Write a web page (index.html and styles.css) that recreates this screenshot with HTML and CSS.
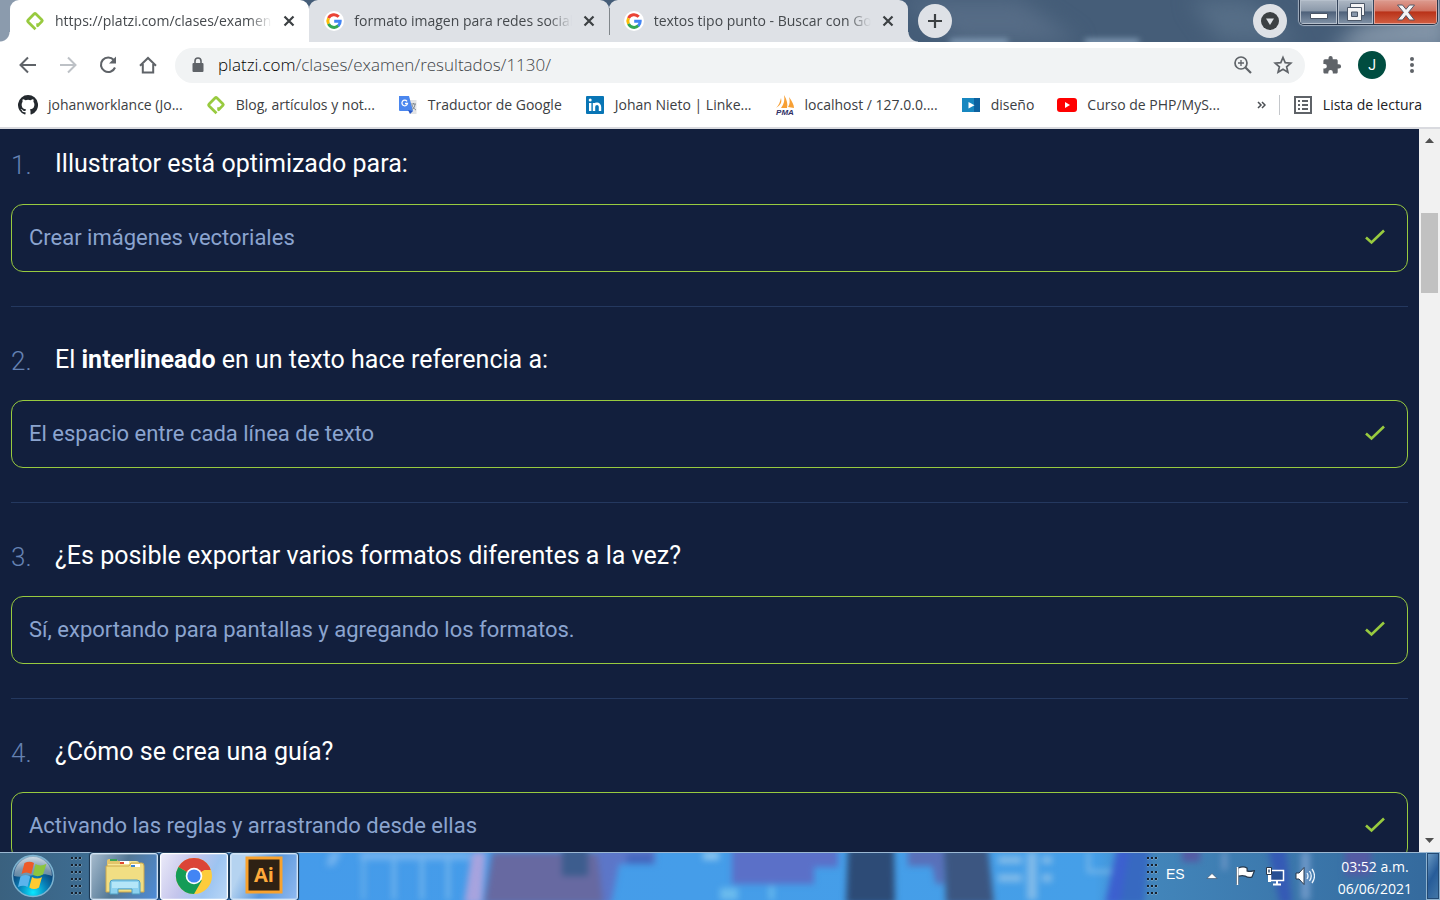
FILE: index.html
```html
<!DOCTYPE html>
<html lang="es">
<head>
<meta charset="utf-8">
<title>Resultados del examen</title>
<link rel="stylesheet" href="styles.css">
</head>
<body>
<svg class="defs" width="0" height="0" aria-hidden="true">
  <defs>
    <symbol id="platzi" viewBox="0 0 20 20"><path d="M10.500 18.300 2.900 10.700a1 1 0 0 1 0-1.400L9.300 2.700a1 1 0 0 1 1.400 0L17 9a1 1 0 0 1 0 1.400L12.600 14.700V12.200" fill="none" stroke="#98ca3f" stroke-width="2.700" stroke-linejoin="round"/></symbol>
    <symbol id="google" viewBox="0 0 20 20"><circle cx="10" cy="10" r="10" fill="#fff"/><g fill="none" stroke-width="3"><path d="M14.700 5.800A6.200 6.200 0 0 0 4.500 7.200" stroke="#ea4335"/><path d="M4.500 7.200a6.200 6.200 0 0 0 0 5.700" stroke="#fbbc05"/><path d="M4.500 12.900a6.200 6.200 0 0 0 9.800 1.800" stroke="#34a853"/><path d="M14.200 14.800A6.200 6.200 0 0 0 16.200 10.200H10.200" stroke="#4285f4"/></g></symbol>
    <symbol id="close" viewBox="0 0 12 12"><path d="M1.500 1.500l9 9M10.500 1.500l-9 9" stroke="#3c4043" stroke-width="2.200"/></symbol>
    <symbol id="check" viewBox="0 0 20 16"><path d="M1 8.500 6.500 13.500 19 1.500" fill="none" stroke="#98ca3f" stroke-width="2.600"/></symbol>
  </defs>
</svg>

<header class="tabstrip">
  <svg class="glass" viewBox="0 0 1440 42" preserveAspectRatio="none" aria-hidden="true">
    <path d="M0 0h20v42H0z" fill="#8b9bad"/>
    <g class="haze"><path d="M900 0h120l60 42H960z" fill="#566c86"/><path d="M1190 0h60l50 42h-80z" fill="#566e87"/><path d="M1360 25 1450 5v47h-120z" fill="#8294a7"/></g>
    <g class="blur"><path d="M950 39h58v6h-58zM1085 39h54v6h-54z" fill="#86a0ba"/></g>
  </svg>
  <nav class="tabs" aria-label="Pestañas">
    <div class="tab active"><svg class="fav"><use href="#platzi"/></svg><a class="tab-title" href="#">https://platzi.com/clases/examen</a><button class="tab-close" aria-label="Cerrar"><svg><use href="#close"/></svg></button></div>
    <div class="tab"><svg class="fav"><use href="#google"/></svg><a class="tab-title" href="#">formato imagen para redes social</a><button class="tab-close" aria-label="Cerrar"><svg><use href="#close"/></svg></button></div>
    <div class="tab last"><svg class="fav"><use href="#google"/></svg><a class="tab-title" href="#">textos tipo punto - Buscar con Go</a><button class="tab-close" aria-label="Cerrar"><svg><use href="#close"/></svg></button></div>
  </nav>
  <button class="round" aria-label="Nueva pestaña"><svg width="16" height="16" viewBox="0 0 16 16"><path d="M8 1v14M1 8h14" stroke="#3c4043" stroke-width="2.200"/></svg></button>
  <div class="window">
    <button class="round" aria-label="Buscar pestañas"><svg width="18" height="18" viewBox="0 0 18 18"><circle cx="9" cy="9" r="9" fill="#3c4043"/><path d="M5 6.500h8L9 13z" fill="#dee1e6"/></svg></button>
    <div class="winbuttons">
      <button class="min" aria-label="Minimizar"><svg width="18" height="6" viewBox="0 0 18 6"><path d="M.5.500h17v5H.5z" fill="#fff" stroke="#4b5667"/></svg></button>
      <button class="max" aria-label="Restaurar"><svg width="22" height="20" viewBox="0 0 22 20"><path d="M5.500 1.500h14v12h-14z" fill="#f4f4f5" stroke="#4b5667"/><path d="M2.500 5.500h14v13h-14z" fill="#f4f4f5" stroke="#4b5667"/><path d="M6.500 10h6v4.500h-6z" fill="#8796aa" stroke="#4b5667"/></svg></button>
      <button class="quit" aria-label="Cerrar ventana"><svg width="20" height="17" viewBox="0 0 20 17"><path d="M1.500 1h5L10 5.300 13.500 1h5l-6 7.400 6 7.600h-5L10 11.600 6.500 16h-5l6-7.600z" fill="#f4f4f5" stroke="#555765"/></svg></button>
    </div>
  </div>
</header>

<div class="toolbar">
  <button class="tool" aria-label="Atrás"><svg viewBox="0 0 20 20"><path d="M18 10H3M10 2.500 2.500 10l7.500 7.500" fill="none" stroke="#5f6368" stroke-width="2"/></svg></button>
  <button class="tool" aria-label="Adelante"><svg viewBox="0 0 20 20"><path d="M2 10h15M10 2.500 17.500 10 10 17.500" fill="none" stroke="#bdc1c6" stroke-width="2"/></svg></button>
  <button class="tool" aria-label="Recargar"><svg viewBox="0 0 20 20"><path d="M15.800 5A7.300 7.300 0 1 0 17 12.500" fill="none" stroke="#5f6368" stroke-width="2.100"/><path d="M18 1.500V8.500H11z" fill="#5f6368"/></svg></button>
  <button class="tool" aria-label="Inicio"><svg viewBox="0 0 20 20"><path d="M2 10.800 10 3l8 7.800M4.800 9v8.500h10.400V9" fill="none" stroke="#5f6368" stroke-width="2"/></svg></button>
  <div class="omnibox">
    <svg class="lock" width="12" height="16" viewBox="0 0 12 16"><path d="M1.500 6h9a1 1 0 0 1 1 1v7a1 1 0 0 1-1 1h-9a1 1 0 0 1-1-1V7a1 1 0 0 1 1-1z" fill="#5f6368"/><path d="M3 7V4a3 3 0 0 1 6 0v3" fill="none" stroke="#5f6368" stroke-width="1.600"/></svg>
    <a class="url" href="#"><span>platzi.com</span>/clases/examen/resultados/1130/</a>
    <button class="tool" aria-label="Zoom"><svg viewBox="0 0 20 20"><circle cx="8" cy="8" r="6" fill="none" stroke="#5f6368" stroke-width="1.700"/><path d="M12.500 12.500 18 18" stroke="#5f6368" stroke-width="2.200"/><path d="M8 5v6M5 8h6" stroke="#5f6368" stroke-width="1.300"/></svg></button>
    <button class="tool" aria-label="Marcador"><svg viewBox="0 0 20 20"><path d="m10 2.500 2.200 5.100 5.600.5-4.200 3.700 1.300 5.400L10 14.300l-4.900 2.900 1.300-5.400L2.200 8.100l5.600-.5z" fill="none" stroke="#5f6368" stroke-width="1.700"/></svg></button>
  </div>
  <button class="tool ext" aria-label="Extensiones"><svg viewBox="0 0 20 20"><path d="M17 9.300h-1.300V5.800c0-.9-.7-1.600-1.600-1.600h-3.400V3a2.100 2.100 0 0 0-4.200 0v1.200H3A1.600 1.600 0 0 0 1.400 5.800v3.200h1.200a2.200 2.200 0 0 1 0 4.500H1.400v3.400c0 .9.700 1.600 1.600 1.600h3.300v-1.300a2.200 2.200 0 0 1 4.500 0v1.300h3.300c.9 0 1.600-.7 1.600-1.600v-3.400H17a2.100 2.100 0 0 0 0-4.200z" fill="#5f6368"/></svg></button>
  <button class="avatar">J</button>
  <button class="tool" aria-label="Menú"><svg viewBox="0 0 20 20"><g fill="#5f6368"><circle cx="10" cy="4" r="2"/><circle cx="10" cy="10" r="2"/><circle cx="10" cy="16" r="2"/></g></svg></button>
</div>

<nav class="bookmarks" aria-label="Marcadores">
  <div class="links">
    <a href="#"><svg viewBox="0 0 16 16"><path fill="#24292e" d="M8 0a8 8 0 0 0-2.530 15.590c.4.070.550-.170.550-.380v-1.490c-2.230.480-2.700-.950-2.700-.950-.360-.920-.890-1.170-.890-1.170-.730-.500.050-.490.050-.490.810.060 1.230.830 1.230.830.720 1.230 1.880.870 2.340.670.070-.520.280-.870.510-1.070-1.780-.200-3.640-.890-3.640-3.950 0-.870.310-1.590.820-2.150-.080-.200-.360-1.020.080-2.120 0 0 .670-.210 2.200.820a7.600 7.600 0 0 1 4 0c1.530-1.040 2.200-.820 2.200-.820.440 1.100.160 1.920.080 2.120.510.560.820 1.270.820 2.150 0 3.070-1.870 3.750-3.650 3.950.290.250.540.730.540 1.480v2.190c0 .210.150.460.550.380A8 8 0 0 0 8 0z"/></svg>johanworklance (Jo...</a>
    <a href="#"><svg><use href="#platzi"/></svg>Blog, artículos y not...</a>
    <a href="#"><svg viewBox="0 0 20 20"><path d="M9 5h9.500v14H12z" fill="#e3e4e6"/><path d="M1 1h10l4 15H2a1 1 0 0 1-1-1z" fill="#4a86ee"/><path d="m10 15 5 1-3 3z" fill="#2856c5"/><path d="M9 6.300A2.800 2.800 0 1 0 9.500 8.500H7" fill="none" stroke="#fff" stroke-width="1.300"/><path d="M13 9h5M15.500 8v1M17 9c0 3-2 5-3.500 6M14 10c.5 2 2 4 4 5" fill="none" stroke="#7d8790"/></svg>Traductor de Google</a>
    <a href="#"><svg viewBox="0 0 20 20"><rect x="1" y="1" width="18" height="18" rx="1" fill="#0875b5"/><path d="M5.200 8v8M9 16V8M9 12c0-4 6-4.500 6 0v4" fill="none" stroke="#fff" stroke-width="2.400"/><circle cx="5.200" cy="5" r="1.500" fill="#fff"/></svg>Johan Nieto | Linke...</a>
    <a href="#"><svg class="sails" viewBox="0 0 20 20"><path d="M6 3c1 4 0 7-5 10 3-3 4-6 5-10zM9 0c3 5 4 9 3 13H6C9 9 10 5 9 0zM14 2c3 4 5 8 5 11l-6-1c2-3 2-6 1-10z" fill="#f7a035"/><text x="10" y="20" class="pma">PMA</text></svg>localhost / 127.0.0....</a>
    <a href="#"><svg viewBox="0 0 20 20"><path d="M1 3h18v14H1z" fill="#1787c0"/><path d="M13 3h6v14h-6z" fill="#0d619f"/><path d="m7.500 7 6 3.300-6 3.300z" fill="#fff"/></svg>diseño</a>
    <a href="#"><svg viewBox="0 0 20 20"><rect y="3" width="20" height="14" rx="3" fill="#f00"/><path d="m8 7 5 3-5 3z" fill="#fff"/></svg>Curso de PHP/MyS...</a>
  </div>
  <button class="more" aria-label="Más marcadores"><svg width="9" height="8" viewBox="0 0 9 8"><path d="m1 1 3 3-3 3M5 1l3 3-3 3" fill="none" stroke="#4b4f54" stroke-width="1.500"/></svg></button>
  <a class="reading" href="#"><svg viewBox="0 0 20 20"><path d="M2 2h16v16H2z" fill="none" stroke="#5f6368" stroke-width="2"/><path d="M5 6h2m2 0h6M5 10h2m2 0h6M5 14h2m2 0h6" stroke="#5f6368" stroke-width="1.800"/></svg>Lista de lectura</a>
</nav>

<div class="viewport">
  <main class="page">
    <ol class="questions">
      <li class="question"><h2><span class="num">1.</span>Illustrator está optimizado para:</h2><div class="answer"><p>Crear imágenes vectoriales</p><svg><use href="#check"/></svg></div></li>
      <li class="question"><h2><span class="num">2.</span><span>El <strong>interlineado</strong> en un texto hace referencia a:</span></h2><div class="answer"><p>El espacio entre cada línea de texto</p><svg><use href="#check"/></svg></div></li>
      <li class="question"><h2><span class="num">3.</span>¿Es posible exportar varios formatos diferentes a la vez?</h2><div class="answer"><p>Sí, exportando para pantallas y agregando los formatos.</p><svg><use href="#check"/></svg></div></li>
      <li class="question"><h2><span class="num">4.</span>¿Cómo se crea una guía?</h2><div class="answer"><p>Activando las reglas y arrastrando desde ellas</p><svg><use href="#check"/></svg></div></li>
    </ol>
  </main>
  <div class="scrollbar" aria-hidden="true">
    <svg width="9" height="5" viewBox="0 0 9 5"><path d="M0 5 4.500 0 9 5z" fill="#505050"/></svg>
    <div class="track"><div class="thumb"></div></div>
    <svg width="9" height="5" viewBox="0 0 9 5"><path d="M0 0l4.500 5L9 0z" fill="#505050"/></svg>
  </div>
</div>

<footer class="taskbar">
  <svg class="glass" viewBox="0 0 1440 48" preserveAspectRatio="none" aria-hidden="true">
    <defs>
      <linearGradient id="base"><stop offset="0" stop-color="#3a617f"/><stop offset=".06" stop-color="#3d6c91"/><stop offset=".11" stop-color="#4283cf"/><stop offset=".2" stop-color="#459bea"/><stop offset=".76" stop-color="#459fe8"/><stop offset=".8" stop-color="#4285ba"/><stop offset="1" stop-color="#34699c"/></linearGradient>
    </defs>
    <path d="M0 0h1440v48H0z" fill="url(#base)"/>
    <g class="blur">
      <path d="M330 0h12l-8 14h-8zM360 0h110v8H360z" fill="#72b2ee"/>
      <path d="M362 8h3v40h-3zM392 8h4v40h-4zM420 8h4v40h-4zM446 8h4v40h-4z" fill="#72b5ec"/>
      <path d="M492 0h105l8 52H484z" fill="#6769a1"/><path d="M472 0h14l-4 52h-18z" fill="#a7a3de"/><path d="M562-4h26v28h-26z" fill="#3d5d8e"/>
      <path d="M597-4h58v16h-36l-8 40h-8z" fill="#5c76c8"/><path d="M627 2h26v10h-26z" fill="#4567bd"/><path d="M703 0h16v8h-16z" fill="#8bc5ef"/>
      <path d="M732-4h106v19h-24v17h-82z" fill="#5b70c8"/><path d="M720 36h18v12h-18zM769 34h5v14h-5z" fill="#6bbbed"/>
      <path d="M848-4h46l1 56h-49z" fill="#2d4b76"/><path d="M908-4h36v36h-8l-4-18h-24z" fill="#5970b9"/><path d="M944-4h44l6 56h-48z" fill="#3c5681"/>
      <path d="M998 4h24v8h-24zM998 22h24v8h-24zM1027 0h10v48h-10zM1042 4h10v8h-10zM1042 22h10v8h-10zM1087 0h3v18h24v3h-27z" fill="#80bae9"/>
      <path d="M1117-4h28l-12 56h-28z" fill="#3c60cf"/><path d="M1130-4h20l-6 56h-24z" fill="#3769c1"/><path d="M1182-4h18v14h-18zM1345-4h26v28h-26z" fill="#545ba4"/><path d="M1268-4h18l6 56h-12z" fill="#355ab5"/><path d="M1301 0h9v48h-9zM1222 0h5v18h-5z" fill="#6e98c8"/>
    </g>
    <path d="M0 .5h1440" stroke="#9cb8d2"/>
  </svg>
  <button class="start" aria-label="Inicio de Windows"><svg width="44" height="44" viewBox="0 0 44 44">
    <defs><radialGradient id="orb" cx=".5" cy=".9" r=".9"><stop offset="0" stop-color="#0be6ff"/><stop offset=".4" stop-color="#087db5"/><stop offset=".7" stop-color="#0b4175"/><stop offset="1" stop-color="#a5bccd"/></radialGradient><linearGradient id="shine" x2="0" y2="1"><stop stop-color="#e8eff3"/><stop offset="1" stop-color="#8ba2b3"/></linearGradient></defs>
    <circle cx="22" cy="22" r="20.500" fill="url(#orb)" stroke="#7cb3d0" stroke-width="1.500"/><path d="M3 22a19 19 0 0 1 38 0C30 17 14 25 3 22z" fill="url(#shine)" opacity=".7"/>
    <path d="M13.500 9q5-2.500 9.500 0l-2.700 11q-5-3-9.800 0z" fill="#ed5b29"/><path d="M24.500 10q5 3 11-.3L32 20.500q-5 3-10 .5z" fill="#8cc53f"/><path d="M9.500 22.500q5-3 9.800 0l-2.800 10.500q-4-2.500-9.500 0z" fill="#5bb4ed"/><path d="M21 23q5 3 10 0l-3 10.500q-5 3-9.700 0z" fill="#ffcb32"/></svg></button>
  <span class="grip"></span>
  <div class="apps">
    <button class="app folder" aria-label="Explorador"><svg width="42" height="38" viewBox="0 0 42 38">
      <path d="M4 4q0-2 2-2h7l2 2h18v28H4z" fill="#e3c56a"/><path d="M7 2h7v2H7z" fill="#3ba454"/><path d="M5 7h12l2-3h14q3 0 3 2v28H5z" fill="#f6e696"/><path d="M17 4h9v3h-9z" fill="#fff"/><path d="M17 5h4v2h-4z" fill="#df4931"/><path d="M3 9h23l2-3h11q2 0 2 3v26H3z" fill="#f1de83" stroke="#cda84d"/><path d="M28 7h9v3h-9z" fill="#fff"/><path d="M28 8h4v2h-4z" fill="#3885d4"/>
      <path d="M7 37V26q0-3 3-3h24q3 0 3 3v11h-8v-5H15v5z" fill="#8cd1ef" stroke="#4f9dc2"/><path d="M9 25h26v6H9z" fill="#c4effc" opacity=".7"/></svg></button>
    <button class="app current" aria-label="Chrome"><svg width="38" height="38" viewBox="0 0 38 38"><circle cx="19" cy="19" r="18" fill="#fdcc3c"/><path d="M19 19 3.400 10A18 18 0 0 1 34.600 10z" fill="#db4437"/><path d="M3.400 10A18 18 0 0 0 19 37l7.800-13.500L19 19z" fill="#149c57"/><path d="M19 10h15.600l1 3H19z" fill="#db4437"/><circle cx="19" cy="19" r="8.300" fill="#fff"/><circle cx="19" cy="19" r="6.600" fill="#4385f4"/></svg></button>
    <button class="app ai-app" aria-label="Illustrator"><svg width="38" height="38" viewBox="0 0 38 38"><path d="M2 2h34v34H2z" fill="#2e2114" stroke="#f9a22d" stroke-width="3"/><text x="19" y="26" class="ai">Ai</text></svg></button>
  </div>
  <span class="grip tray-grip"></span>
  <div class="tray">
    <span class="lang">ES</span>
    <svg width="12" height="6" viewBox="0 0 12 6"><path d="M.8 5.500 6 .5l5.200 5z" fill="#fff" stroke="#3a4b61" stroke-width=".6"/></svg>
    <svg class="flag" width="20" height="20" viewBox="0 0 20 20"><path d="M2.500 1.500v17M3.500 2.500q5-2 8 0v3q3 1 7 0l-2 5q-3 1-6-1-3-1-7 0z" fill="#fff" stroke="#26384c" stroke-width="2.400"/><path d="M2.500 1v18" stroke="#fff" stroke-width="1.600"/><path d="M3.500 2.500q5-2 8 0v3q3 1 7 0l-2 5q-3 1-6-1-3-1-7 0z" fill="#fff"/></svg>
    <svg width="20" height="20" viewBox="0 0 20 20"><path d="M5.500 4.500h13v10h-13z" fill="#274f93" stroke="#fff" stroke-width="1.500"/><path d="M12 15v3M8 18.500h8M4 8v7h2" fill="none" stroke="#fff" stroke-width="2"/><path d="M1.500 1.500h5v7h-5z" fill="#fff" stroke="#29384c"/><path d="M3 3.500h2v3H3z" fill="#677b91"/></svg>
    <svg width="20" height="20" viewBox="0 0 20 20"><path d="M1 7h3l5-5.500v17L4 13H1z" fill="#fff" stroke="#29384c"/><path d="M12 7q2 3 0 6M14.500 5q3.500 5 0 10M17 3q5 7 0 14" fill="none" stroke="#e9f3fc" stroke-width="1.300"/></svg>
  </div>
  <time class="clock" datetime="2021-06-06T03:52">03:52 a.m.<br>06/06/2021</time>
  <button class="desktop" aria-label="Mostrar escritorio"></button>
</footer>
</body>
</html>
```
FILE: styles.css
```css
* { box-sizing: border-box; }
body { margin: 0; height: 100vh; display: flex; flex-direction: column; overflow: hidden; background: #fff; font-family: "Open Sans", "Noto Sans", sans-serif; }
button { margin: 0; padding: 0; border: 0; background: none; display: grid; place-items: center; font: inherit; }
a { color: inherit; text-decoration: none; }
svg { display: block; flex: none; }
.defs, .glass { position: absolute; }
.glass { inset: 0; width: 100%; height: 100%; }
.blur { filter: blur(3px); }
.haze { filter: blur(10px); }

.tabstrip { position: relative; flex: none; display: flex; align-items: center; height: 42px; padding-left: 10px; background: #455d78; overflow: hidden; }
.tabs { position: relative; display: flex; width: 898px; height: 42px; }
.tab { position: relative; flex: 1; min-width: 0; display: flex; align-items: center; padding: 0 12px 0 15px; background: #dee1e6; border-radius: 9px 9px 0 0; font-size: 14px; color: #45494d; }
.tab.active { background: #fff; }
.tab.active::before, .tab.last::after { content: ""; position: absolute; bottom: 0; width: 10px; height: 10px; }
.tab.active::before { right: 100%; background: radial-gradient(circle at 0 0, transparent 9px, #fff 10px); }
.tab.last::after { left: 100%; background: radial-gradient(circle at 100% 0, transparent 9px, #dee1e6 10px); }
.tab.last { padding-left: 14px; border-left: 1px solid #80868b; border-image: linear-gradient(transparent 9px, #80868b 9px, #80868b 34px, transparent 34px) 1; }
.tab .fav { width: 20px; height: 20px; margin-right: 10px; }
.tab-title { flex: 1; min-width: 0; overflow: hidden; white-space: nowrap; line-height: 20px; padding-bottom: 1px; -webkit-mask-image: linear-gradient(to left, transparent, #000 24px); mask-image: linear-gradient(to left, transparent, #000 24px); }
.tab-close { width: 16px; height: 16px; margin-left: 9px; }
.tab-close svg { width: 12px; height: 12px; }
.round { position: relative; width: 34px; height: 34px; margin-left: 10px; border-radius: 50%; background: #dee1e6; }
.window { position: relative; display: flex; align-items: center; align-self: stretch; gap: 12px; margin-left: auto; padding-right: 2px; }
.winbuttons { display: flex; align-self: flex-start; height: 25px; border: 1px solid #29364a; border-top: 0; border-radius: 0 0 5px 5px; overflow: hidden; box-shadow: 0 0 1px 1px #a4b1c0; }
.winbuttons button { height: 24px; width: 38px; background: linear-gradient(#aeb8c4, #8b99aa 45%, #4e617a 50%, #8394a8); border-right: 1px solid #35445a; box-shadow: inset 0 0 0 1px #b6c0cc; }
.winbuttons .max { width: 36px; }
.winbuttons .min svg { margin-top: 8px; }
.winbuttons .quit { width: 63px; border: 0; background: linear-gradient(#dd9c90, #cf705f 45%, #b93219 50%, #d25f43); box-shadow: inset 0 0 0 1px #e0a196; }

.toolbar { flex: none; display: flex; align-items: center; height: 46px; padding: 0 18px; gap: 20px; }
.tool { flex: none; width: 20px; height: 20px; }
.tool svg { width: 20px; height: 20px; }
.omnibox { flex: 1; display: flex; align-items: center; height: 35px; margin-left: -3px; margin-right: -3px; padding: 0 12px 0 17px; gap: 20px; border-radius: 18px; background: #f1f3f4; }
.omnibox .lock { margin-right: -6px; }
.url { flex: 1; font-size: 17px; line-height: 24px; font-weight: 300; color: #3f4347; }
.url span { color: #000; }
.avatar { flex: none; width: 28px; height: 28px; margin: 0 -4px; border-radius: 50%; background: #004d40; color: #fff; font: 14px Roboto, sans-serif; }

.bookmarks { flex: none; display: flex; align-items: center; height: 41px; padding: 0 18px 6px; border-bottom: 2px solid #d9dadf; font-size: 14px; color: #3c4043; white-space: nowrap; }
.bookmarks a { display: flex; align-items: center; gap: 10px; }
.bookmarks svg { width: 20px; height: 20px; }
.links { flex: 1; display: flex; gap: 23px; }
.bookmarks .sails { overflow: visible; }
.pma { font: italic bold 8px "Liberation Sans", sans-serif; fill: #303064; text-anchor: middle; }
.bookmarks .more svg { width: 9px; height: 8px; }
.bookmarks .reading { margin-left: 13px; padding-left: 13px; border-left: 1px solid #c4c7cb; color: #202124; }

.viewport { flex: 1; min-height: 0; display: flex; background: #121f3d; }
.page { flex: 1; min-width: 0; padding: 0 11px; overflow: hidden; font-family: Roboto, sans-serif; }
.questions { margin: 0; padding: 0; list-style: none; }
.question { padding: 37px 0 34px; border-top: 1px solid #24385f; }
.question:first-child { padding-top: 19px; border-top: 0; }
.question h2 { display: flex; align-items: flex-start; margin: 0 0 24px; font-size: 25px; line-height: 32px; font-weight: 400; color: #fff; }
.num { width: 44px; height: 32px; line-height: 34px; font-size: 26px; font-weight: 300; color: #6582b3; }
.answer { display: flex; align-items: center; justify-content: space-between; height: 68px; padding: 0 22px 0 17px; border: 1px solid #98ca3f; border-radius: 12px; }
.answer p { margin: 0; font-size: 22px; line-height: 32px; color: #8ba4cf; }
.answer svg { width: 20px; height: 16px; margin-bottom: 3px; }
.scrollbar { flex: none; display: flex; flex-direction: column; align-items: center; width: 21px; padding: 9px 0; background: #f1f1f1; }
.track { flex: 1; width: 17px; padding-top: 70px; }
.thumb { height: 80px; background: #c1c1c1; }

.taskbar { position: relative; flex: none; display: flex; align-items: center; height: 48px; padding-left: 11px; color: #fff; overflow: hidden; }
.taskbar > :not(.glass) { position: relative; }
.grip { width: 11px; height: 39px; margin: 0 8px 0 16px; background: radial-gradient(circle at 1px 1px, #17212d 1px, #a2bccc 1px, transparent 2px) 0 0 / 4px 7px; }
.apps { display: flex; gap: 2px; }
.app { width: 68px; height: 47px; border: 1px solid #d2e4f5; border-radius: 3px; background: linear-gradient(115deg, #b5d3f0 0 20%, #5a97dc 55%, #8fb9f0); box-shadow: inset 0 0 0 1px #ffffff40, 0 0 1px 1px #19334e; }
.app.folder { background: linear-gradient(115deg, #a6bbcd, #527795 45%, #4e8cd8); }
.app.current { border-color: #fff; background: linear-gradient(115deg, #eae9f8, #c4c5ec 40%, #9dc4f1 70%, #b8d7f7); }
.ai-app svg { margin-bottom: 2px; }
.ai { font: bold 20px "Open Sans", sans-serif; fill: #ffaa3b; text-anchor: middle; }
.tray-grip { margin-left: auto; }
.tray { display: flex; align-items: center; gap: 10px; margin-right: 23px; }
.lang { margin: 0 11px 4px 0; font: 14px "Liberation Sans", sans-serif; }
.tray .flag { margin-left: 7px; }
.clock { text-align: center; font-size: 14px; line-height: 22px; padding-top: 3px; }
.desktop { align-self: stretch; width: 14px; margin-left: 14px; border: 1px solid #8fb3cf; background: linear-gradient(120deg, #6f9ec5, #275c99 50%, #4579a8); box-shadow: inset 0 0 0 1px #234a74; }
```
